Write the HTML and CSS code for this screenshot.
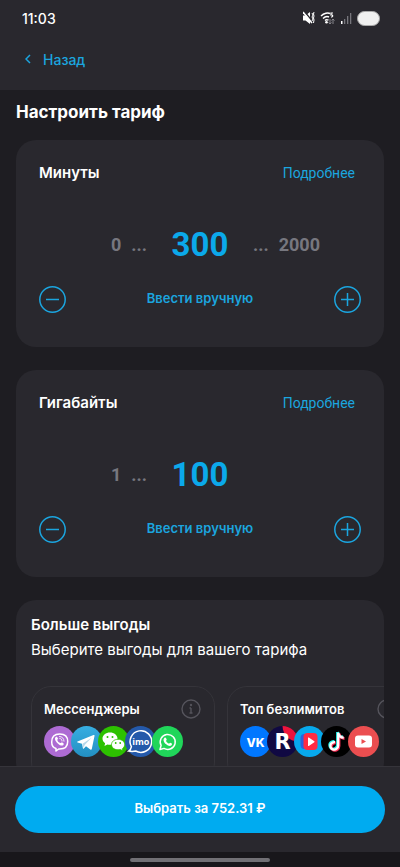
FILE: index.html
```html
<!DOCTYPE html>
<html lang="ru">
<head>
    <meta charset="UTF-8">
    <meta name="viewport" content="width=device-width, initial-scale=1.0">
    <title>Настроить тариф</title>
    <link rel="stylesheet" href="styles.css">
</head>
<body>
    <header class="header">
        <div class="status-bar">
            <span class="time">11:03</span>
            <div class="status-icons">
                <svg width="12" height="14" viewBox="0 0 12 14">
                    <path d="M0 4.500h2.500L7 1v12L2.500 9.500H0z" fill="#fff"/>
                    <path d="M1 0l9 11" stroke="#29282e" stroke-width="1.500"/>
                    <path d="M0 1l9 11" stroke="#fff" stroke-width="1.500"/>
                    <path d="M9 2l1 2-1 2 1 2-1 2M11 1l-.5 2 .5 2-.5 2 .5 2-.5 3" fill="none" stroke="#fff"/>
                </svg>
                <svg width="15" height="14" viewBox="0 0 15 14">
                    <g fill="none" stroke="#fff" stroke-width="1.400">
                        <path d="M1 5c3-3 7-3.500 9-2.500M3 7.500c2-2 4-2.500 6-1.500M5 9.500c1-1 2-1 3.500-.3"/>
                        <path d="M13 2h-2v2c2-.5 2.500 2 0 2" stroke-width="1.200"/>
                    </g>
                    <circle cx="6.500" cy="11.300" r="1.300" fill="#fff"/>
                    <path d="M10 8v5m-1.500-1.500L10 13l1.500-1.500M13 13V8m-1.500 1.500L13 8l1.500 1.500" fill="none" stroke="#85848a"/>
                </svg>
                <svg width="12" height="14" viewBox="0 0 12 14">
                    <path d="M1 10h1.500v3H1z" fill="#fff"/>
                    <path d="M4 8h1.300v5H4zM7 5h1.300v8H7zM10 2h1.300v11H10z" fill="#77767c"/>
                </svg>
                <span class="battery"></span>
            </div>
        </div>
        <a href="#" class="back">
            <svg width="6" height="10" viewBox="0 0 6 10" fill="none" stroke="currentColor" stroke-width="1.500"><path d="M5 1L1 5l4 4"/></svg>
            Назад
        </a>
    </header>

    <main class="content">
        <h1>Настроить тариф</h1>

        <section class="card option">
            <div class="option-head">
                <h2>Минуты</h2>
                <a href="#" class="more">Подробнее</a>
            </div>
            <div class="values">
                <div class="limit min"><span>0</span><span>...</span></div>
                <div class="current">300</div>
                <div class="limit"><span>...</span><span>2000</span></div>
            </div>
            <div class="controls">
                <button class="step" aria-label="Меньше минут">
                    <svg width="27" height="27" viewBox="0 0 27 27" fill="none" stroke="currentColor" stroke-width="1.500"><circle cx="13.500" cy="13.500" r="12.700"/><path d="M7 13.500h13"/></svg>
                </button>
                <button class="manual">Ввести вручную</button>
                <button class="step" aria-label="Больше минут">
                    <svg width="27" height="27" viewBox="0 0 27 27" fill="none" stroke="currentColor" stroke-width="1.500"><circle cx="13.500" cy="13.500" r="12.700"/><path d="M7 13.500h13M13.500 7v13"/></svg>
                </button>
            </div>
        </section>

        <section class="card option">
            <div class="option-head">
                <h2>Гигабайты</h2>
                <a href="#" class="more">Подробнее</a>
            </div>
            <div class="values">
                <div class="limit min"><span>1</span><span>...</span></div>
                <div class="current">100</div>
            </div>
            <div class="controls">
                <button class="step" aria-label="Меньше гигабайтов">
                    <svg width="27" height="27" viewBox="0 0 27 27" fill="none" stroke="currentColor" stroke-width="1.500"><circle cx="13.500" cy="13.500" r="12.700"/><path d="M7 13.500h13"/></svg>
                </button>
                <button class="manual">Ввести вручную</button>
                <button class="step" aria-label="Больше гигабайтов">
                    <svg width="27" height="27" viewBox="0 0 27 27" fill="none" stroke="currentColor" stroke-width="1.500"><circle cx="13.500" cy="13.500" r="12.700"/><path d="M7 13.500h13M13.500 7v13"/></svg>
                </button>
            </div>
        </section>

        <section class="card benefits">
            <h2>Больше выгоды</h2>
            <p>Выберите выгоды для вашего тарифа</p>
            <div class="packs">
                <article class="pack">
                    <div class="pack-head">
                        <h3>Мессенджеры</h3>
                        <button class="info" aria-label="О мессенджерах">
                            <svg width="20" height="20" viewBox="0 0 20 20" fill="none" stroke="currentColor" stroke-width="1.400"><circle cx="10" cy="10" r="9"/><path d="M10 9v5M8.500 9H10M8.500 14h3"/><circle cx="10" cy="6" r=".5"/></svg>
                        </button>
                    </div>
                    <div class="apps">
                        <!-- Viber -->
                        <svg class="app" viewBox="0 0 31 31">
                            <circle cx="15.500" cy="15.500" r="15.500" fill="#ad6bd3"/>
                            <path d="M12 22.500c-3-.8-4.300-2.500-4.300-6.500 0-5.500 2.300-8 8-8s8 2.500 8 7.500-2.500 7.500-8 7.500h-1L12 25z" fill="none" stroke="#fff" stroke-width="1.500" stroke-linejoin="round"/>
                            <path d="M11.500 11.200c1-1 1.700-.3 2.300.9.600 1-.5 1.300-.5 2 .3 1.500 1.500 2.700 3 3 .8 0 1-1 2-.5 1.300.8 1.800 1.300 1.100 2.300-1.400 1.500-3.400.3-5-1-2.200-1.700-4.400-4.900-2.900-6.700z" fill="#fff"/>
                            <path d="M15.500 10.500c2.500 0 4.500 1.800 4.500 4.700M15.800 12.500c1.400.1 2.200 1 2.200 2.500" fill="none" stroke="#fff" stroke-width=".9" stroke-linecap="round"/>
                        </svg>
                        <!-- Telegram -->
                        <svg class="app" viewBox="0 0 31 31">
                            <defs><linearGradient id="tg" x2="0" y2="1"><stop stop-color="#37aee2"/><stop offset="1" stop-color="#238fc2"/></linearGradient></defs>
                            <circle cx="15.500" cy="15.500" r="15.500" fill="url(#tg)"/>
                            <path d="M6.500 15.500L22.500 9c.8-.3 1.200.2 1 1l-2.700 13c-.2.900-.8 1-1.500.5L15 20.300l-2.200 2.200c-.5.500-.8.300-.9-.3l-.9-4.400-4.400-1.400c-.6-.2-.6-.6-.1-.9z" fill="#fff"/>
                            <path d="M11.500 17.800l9-6.100-6.800 7.300-1.100 3z" fill="#b9d9ea"/>
                        </svg>
                        <!-- WeChat -->
                        <svg class="app" viewBox="0 0 31 31">
                            <circle cx="15.500" cy="15.500" r="15.500" fill="#2dc100"/>
                            <path d="M12 6.500c4.200 0 7.500 2.600 7.500 6.100s-3.300 6.100-7.500 6.100c-.9 0-1.800-.1-2.600-.3L6.500 20l.6-2.700c-1.600-1.100-2.600-2.800-2.600-4.700C4.500 9.100 7.800 6.500 12 6.500z" fill="#fff"/>
                            <circle cx="9.500" cy="11" r="1" fill="#2dc100"/><circle cx="14.500" cy="11" r="1" fill="#2dc100"/>
                            <path d="M20 13.300c3.700 0 6.700 2.300 6.700 5.300 0 1.700-.9 3.100-2.300 4.100l.5 2.100-2.500-1.300c-.8.200-1.500.3-2.400.3-3.700 0-6.500-2.300-6.500-5.200s2.800-5.300 6.500-5.300z" fill="#fff" stroke="#2dc100" stroke-width=".8"/>
                            <circle cx="17.700" cy="17" r=".9" fill="#2dc100"/><circle cx="22.200" cy="17" r=".9" fill="#2dc100"/>
                        </svg>
                        <!-- imo -->
                        <svg class="app" viewBox="0 0 31 31">
                            <circle cx="15.500" cy="15.500" r="15.500" fill="#2459aa"/>
                            <path d="M6.400 20.700A10.800 10.800 0 1 1 10.700 25c-2.200.5-4.600.5-7 .1 1.500-1 2.400-2.500 2.700-4.400z" fill="none" stroke="#fff" stroke-width="1.500"/>
                            <text class="imo" x="15.800" y="18.500" text-anchor="middle">imo</text>
                        </svg>
                        <!-- WhatsApp -->
                        <svg class="app" viewBox="0 0 31 31">
                            <circle cx="15.500" cy="15.500" r="15.500" fill="#20d65a"/>
                            <path d="M8 23.500l1.100-4.100A7.500 7.500 0 1 1 12 22.400z" fill="none" stroke="#fff" stroke-width="1.500" stroke-linejoin="round"/>
                            <path d="M12.400 12c.7-.8 1.400-.5 1.700.2l.6 1.400c.2.500-.7 1-.6 1.400.6 1.300 1.500 2.100 2.800 2.600.5.100.9-.9 1.300-.8l1.600.8c.5.300 0 1.500-.5 1.900-1.500 1.100-3.700 0-5.200-1.200-1.900-1.600-3.600-4.300-1.700-6.300z" fill="#fff"/>
                        </svg>
                    </div>
                </article>

                <article class="pack">
                    <div class="pack-head">
                        <h3>Топ безлимитов</h3>
                        <button class="info" aria-label="О топе безлимитов">
                            <svg width="20" height="20" viewBox="0 0 20 20" fill="none" stroke="currentColor" stroke-width="1.400"><circle cx="10" cy="10" r="9"/><path d="M10 9v5M8.500 9H10M8.500 14h3"/><circle cx="10" cy="6" r=".5"/></svg>
                        </button>
                    </div>
                    <div class="apps">
                        <!-- VK -->
                        <svg class="app" viewBox="0 0 31 31">
                            <circle cx="15.500" cy="15.500" r="15.500" fill="#0077ff"/>
                            <text class="vk" x="15.500" y="20.500" text-anchor="middle">VK</text>
                        </svg>
                        <!-- Rutube -->
                        <svg class="app" viewBox="0 0 31 31">
                            <circle cx="15.500" cy="15.500" r="15.500" fill="#100943"/>
                            <path d="M15.500 0A15.500 15.500 0 0 1 31 15.500C22 15 16 9 15.500 0z" fill="#ed143b"/>
                            <text class="rutube" x="15.500" y="23" text-anchor="middle">R</text>
                        </svg>
                        <!-- VK Video -->
                        <svg class="app" viewBox="0 0 31 31">
                            <circle cx="15.500" cy="15.500" r="15.500" fill="#07a9ed"/>
                            <rect x="6.500" y="8" width="15" height="15" rx="4" fill="#2862df"/>
                            <rect x="9.500" y="7" width="14" height="17" rx="4" fill="#ff2b42"/>
                            <path d="M14 12v7.500c0 .5.400.7.800.4l5.500-3.700c.4-.3.400-.6 0-.9l-5.500-3.700c-.4-.3-.8-.1-.8.400z" fill="#fff"/>
                        </svg>
                        <!-- TikTok -->
                        <svg class="app" viewBox="0 0 31 31">
                            <circle cx="15.500" cy="15.500" r="15.500" fill="#000"/>
                            <g fill="none" stroke-width="2.800">
                                <path d="M16.500 6v12.500c0 3-2.500 4.700-4.700 4.300-3.500-.6-4.200-5.100-1.200-6.800.9-.5 1.700-.6 2.700-.5M16.500 6c.6 3.200 2.500 4.800 5.500 5" stroke="#25f4ee"/>
                                <path d="M18 7.500V20c0 3-2.500 4.700-4.700 4.300-3.500-.6-4.200-5.100-1.200-6.800.9-.5 1.700-.6 2.700-.5M18 7.500c.6 3.200 2.500 4.800 5.500 5" stroke="#fe2c55"/>
                                <path d="M17.200 6.700v12.500c0 3-2.500 4.700-4.700 4.300-3.500-.6-4.200-5.100-1.200-6.800.9-.5 1.700-.6 2.700-.5M17.200 6.700c.6 3.200 2.500 4.800 5.500 5" stroke="#fff" stroke-width="2.300"/>
                            </g>
                        </svg>
                        <!-- YouTube -->
                        <svg class="app" viewBox="0 0 31 31">
                            <circle cx="15.500" cy="15.500" r="15.500" fill="#eb4e50"/>
                            <rect x="7" y="9.500" width="17" height="12" rx="3" fill="#fff"/>
                            <path d="M13.500 13v5l4.500-2.500z" fill="#eb4e50"/>
                        </svg>
                    </div>
                </article>
            </div>
        </section>
    </main>

    <footer class="footer">
        <button class="submit">Выбрать за 752.31 ₽</button>
    </footer>
    <div class="nav-bar"><span></span></div>
</body>
</html>
```

FILE: styles.css
```css
* {
    box-sizing: border-box;
}
body {
    font-family: Inter, "Noto Sans", sans-serif;
    margin: 0;
    height: 100vh;
    display: flex;
    flex-direction: column;
    background-color: #1e1d22;
    color: #fff;
}
h1, h2, h3, p {
    margin: 0;
}
a {
    color: #1ba5df;
    text-decoration: none;
}
button {
    font-family: inherit;
    padding: 0;
    border: none;
    background: none;
    color: #1ba5df;
    cursor: pointer;
}
svg {
    display: block;
    flex-shrink: 0;
}
.header {
    flex-shrink: 0;
    height: 90px;
    background-color: #29282e;
}
.status-bar {
    display: flex;
    justify-content: space-between;
    align-items: center;
    height: 36px;
    padding: 0 20px 0 22px;
}
.time {
    font-size: 14px;
    font-weight: 500;
}
.status-icons {
    display: flex;
    align-items: center;
    gap: 5px;
}
.battery {
    width: 23px;
    height: 15px;
    border: 1px solid #aaa;
    border-radius: 8px;
    background: #f0f0f0;
}
.back {
    display: inline-flex;
    align-items: center;
    gap: 12px;
    height: 48px;
    padding: 0 25px 2px;
    font-size: 14px;
    font-weight: 500;
}
.content {
    flex: 1;
    min-height: 0;
    overflow: hidden;
    padding: 12px 16px 0;
}
h1 {
    font-size: 17px;
    line-height: 20px;
    font-weight: 700;
}
.card {
    margin-top: 23px;
    border-radius: 20px;
    background-color: #29282e;
}
h1 + .card {
    margin-top: 18px;
}
.option {
    padding: 23px 23px 34px;
}
.option-head {
    display: flex;
    justify-content: space-between;
    align-items: center;
}
h2 {
    font-size: 15px;
    line-height: 20px;
    font-weight: 600;
}
.more {
    margin-right: 6px;
    font-family: Roboto, sans-serif;
    font-size: 14px;
    line-height: 20px;
}
.values {
    display: grid;
    grid-template-columns: 1fr 106px 1fr;
    align-items: center;
    margin-top: 42px;
    font-family: Roboto, sans-serif;
    font-weight: 700;
}
.limit {
    display: flex;
    gap: 10px;
    font-size: 18px;
    line-height: 20px;
    color: #77777f;
}
.min {
    justify-content: flex-end;
}
.current {
    font-size: 33px;
    line-height: 40px;
    text-align: center;
    color: #0ba9ea;
}
.controls {
    display: flex;
    justify-content: space-between;
    align-items: center;
    margin-top: 21px;
}
.manual {
    padding-bottom: 4px;
    font-size: 13px;
    line-height: 20px;
    font-weight: 600;
}
.benefits {
    padding: 15px 0 0 15px;
    overflow: hidden;
}
.benefits p {
    margin-top: 5px;
    font-size: 15px;
    line-height: 20px;
}
.packs {
    display: flex;
    gap: 12px;
    margin-top: 26px;
}
.pack {
    flex: 0 0 184px;
    padding: 12px 13px 12px 12px;
    border: 1px solid #35343a;
    border-radius: 20px;
}
.pack-head {
    display: flex;
    justify-content: space-between;
    align-items: center;
}
h3 {
    font-size: 13px;
    line-height: 20px;
    font-weight: 600;
    white-space: nowrap;
}
.info {
    color: #55545c;
}
.apps {
    display: flex;
    margin-top: 7px;
    padding-bottom: 12px;
}
.app {
    width: 31px;
    height: 31px;
    margin-right: -4px;
}
.imo {
    font: 700 9px "Open Sans", sans-serif;
    fill: #fff;
}
.vk {
    font: 800 12px Inter, sans-serif;
    fill: #fff;
}
.rutube {
    font: 700 21px "DejaVu Sans", sans-serif;
    fill: #fff;
}
.footer {
    flex-shrink: 0;
    padding: 19px 15px;
    border-top: 1px solid #35343a;
    background-color: #29282e;
}
.submit {
    width: 100%;
    height: 47px;
    padding-bottom: 4px;
    border-radius: 24px;
    background-color: #00abf0;
    color: #fff;
    font-size: 13px;
    font-weight: 600;
}
.nav-bar {
    display: flex;
    flex-shrink: 0;
    justify-content: center;
    align-items: center;
    height: 15px;
    background-color: #18171b;
}
.nav-bar span {
    width: 140px;
    height: 4px;
    border-radius: 2px;
    background: #717075;
}
```
